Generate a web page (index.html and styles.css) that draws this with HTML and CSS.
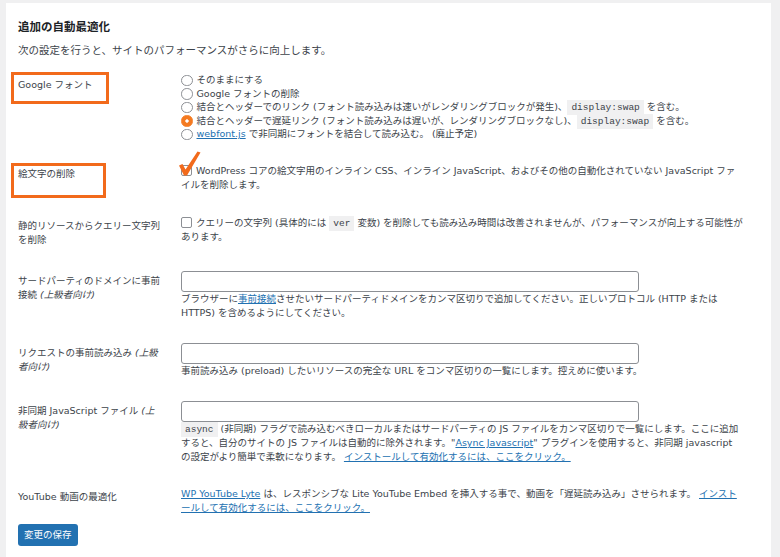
FILE: index.html
```html
<!DOCTYPE html>
<html lang="ja">
<head>
<meta charset="utf-8">
<title>追加の自動最適化</title>
<link rel="stylesheet" href="styles.css">
</head>
<body>
<div class="panel">
  <h2 class="title">追加の自動最適化</h2>
  <p class="intro">次の設定を行うと、サイトのパフォーマンスがさらに向上します。</p>

  <div class="form">
    <div class="row row-radios">
      <div class="label"><span class="mark mark-font">Google フォント</span></div>
      <div class="field">
        <div class="opt"><span class="radio"></span><span>そのままにする</span></div>
        <div class="opt"><span class="radio"></span><span>Google フォントの削除</span></div>
        <div class="opt"><span class="radio"></span><span>結合とヘッダーでのリンク (フォント読み込みは速いがレンダリングブロックが発生)、<code>display:swap</code> を含む。</span></div>
        <div class="opt"><span class="radio on"></span><span>結合とヘッダーで遅延リンク (フォント読み込みは遅いが、レンダリングブロックなし)、<code>display:swap</code> を含む。</span></div>
        <div class="opt"><span class="radio"></span><span><a href="#">webfont.js</a> で非同期にフォントを結合して読み込む。 (廃止予定)</span></div>
      </div>
    </div>

    <div class="row">
      <div class="label"><span class="mark mark-emoji">絵文字の削除</span></div>
      <div class="field">
        <span class="check"><svg class="tick" viewBox="0 0 24 26" width="24" height="26"><path d="M1 14.5 L4.5 13 L7.5 18.5 L19.5 0.5 L22.5 1.5 L9 24.5 L6 24.5 Z" fill="#f26a1b"/></svg></span>WordPress コアの絵文字用のインライン CSS、インライン JavaScript、およびその他の自動化されていない JavaScript ファ<br>イルを削除します。
      </div>
    </div>

    <div class="row">
      <div class="label">静的リソースからクエリー文字列<br>を削除</div>
      <div class="field">
        <span class="check"></span>クエリーの文字列 (具体的には <code>ver</code> 変数) を削除しても読み込み時間は改善されませんが、パフォーマンスが向上する可能性が<br>あります。
      </div>
    </div>

    <div class="row row-input">
      <div class="label">サードパーティのドメインに事前<br>接続 <em>(上級者向け)</em></div>
      <div class="field">
        <input class="text" type="text">
        <p class="help">ブラウザーに<a href="#">事前接続</a>させたいサードパーティドメインをカンマ区切りで追加してください。正しいプロトコル (HTTP または<br>HTTPS) を含めるようにしてください。</p>
      </div>
    </div>

    <div class="row row-input">
      <div class="label">リクエストの事前読み込み <em>(上級<br>者向け)</em></div>
      <div class="field">
        <input class="text" type="text">
        <p class="help">事前読み込み (preload) したいリソースの完全な URL をコンマ区切りの一覧にします。控えめに使います。</p>
      </div>
    </div>

    <div class="row row-input">
      <div class="label">非同期 JavaScript ファイル <em>(上<br>級者向け)</em></div>
      <div class="field">
        <input class="text" type="text">
        <p class="help"><code>async</code> (非同期) フラグで読み込むべきローカルまたはサードパーティの JS ファイルをカンマ区切りで一覧にします。ここに追加<br>すると、自分のサイトの JS ファイルは自動的に除外されます。"<a href="#">Async Javascript</a>" プラグインを使用すると、非同期 javascript<br>の設定がより簡単で柔軟になります。 <a href="#">インストールして有効化するには、ここをクリック。</a></p>
      </div>
    </div>

    <div class="row row-last">
      <div class="label">YouTube 動画の最適化</div>
      <div class="field">
        <a href="#">WP YouTube Lyte</a> は、レスポンシブな Lite YouTube Embed を挿入する事で、動画を「遅延読み込み」させられます。 <a href="#">インスト<br>ールして有効化するには、ここをクリック。</a>
      </div>
    </div>
  </div>

  <div class="submit"><span class="btn">変更の保存</span></div>
</div>
</body>
</html>
```

FILE: styles.css
```css
* { box-sizing: border-box; }

html, body { height: 100%; }

body {
  margin: 0;
  background: #f0f0f1;
  font-family: "DejaVu Sans", "Noto Sans CJK JP", sans-serif;
  font-size: 9.5px;
  color: #3c434a;
}

.panel {
  margin: 3px 9px 0 6px;
  height: calc(100% - 3px);
  background: #fff;
  padding: 15.5px 12px 0 12px;
}

.title {
  margin: 0 0 8px;
  font-size: 11.5px;
  line-height: 16px;
  font-weight: 700;
  color: #1d2327;
}

.intro {
  margin: 0 0 5px;
  font-size: 10.5px;
  line-height: 14px;
}

.row {
  display: grid;
  grid-template-columns: 163px 1fr;
}

.label {
  padding: 15px 8px 12px 0;
  line-height: 14px;
  color: #3c434a;
}

.label em { font-style: italic; }

.mark { position: relative; display: inline-block; }

.mark::before {
  content: "";
  position: absolute;
  left: -7px;
  border: 3px solid #f26a1b;
}

.mark-font { margin-top: 1px; }
.mark-font::before { top: -6px; width: 92px; height: 26px; }
.mark-emoji::before { top: -4px; width: 89px; height: 29px; }

.field {
  position: relative;
  padding: 12px 4px 12px 0;
  line-height: 14px;
}

.row-radios .field { padding-bottom: 11px; }
.row-input .field { padding-bottom: 11px; }
.row-last .field { padding-bottom: 9px; }

.opt {
  display: flex;
  align-items: center;
  height: 13.5px;
  white-space: nowrap;
}

.radio {
  flex: none;
  width: 11.5px;
  height: 11.5px;
  margin-right: 4px;
  border: 1px solid #8c8f94;
  border-radius: 50%;
  background: #fff;
}

.radio.on {
  border-color: #f47a20;
  background: radial-gradient(circle, #fff 0 1.4px, #f47a20 1.9px);
}

.check {
  position: relative;
  display: inline-block;
  width: 11px;
  height: 11px;
  margin-right: 4px;
  vertical-align: -1.5px;
  border: 1px solid #8c8f94;
  border-radius: 2px;
  background: #fff;
}

.tick {
  position: absolute;
  left: -4px;
  top: -15px;
}

code {
  font-family: "Liberation Mono", monospace;
  font-size: 9.5px;
  line-height: 1;
  background: #f0f0f1;
  padding: 2px 4px;
  color: #3c434a;
}

a {
  color: #2271b1;
  text-decoration: underline;
}

.text {
  display: block;
  width: 458px;
  height: 21px;
  margin: 0;
  border: 1px solid #8c8f94;
  border-radius: 3px;
  background: #fff;
}

.help {
  margin: 0;
  line-height: 14px;
}

.btn {
  display: inline-block;
  height: 22px;
  padding: 0 6px;
  line-height: 22px;
  background: #2271b1;
  color: #fff;
  border-radius: 3px;
  font-size: 9.5px;
}
```
